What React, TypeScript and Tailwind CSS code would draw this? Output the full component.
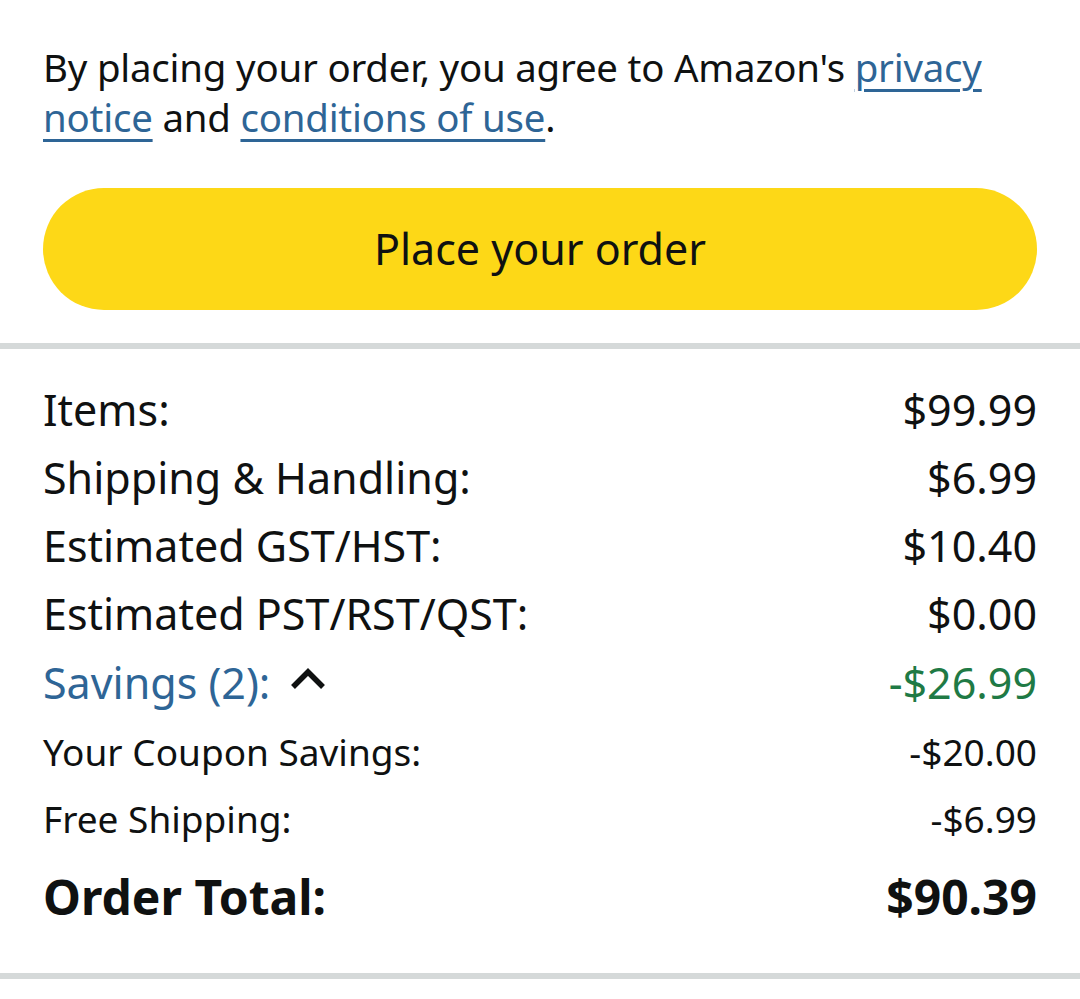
import React from 'react';

const rows = [
  { label: 'Items:', value: '$99.99' },
  { label: 'Shipping & Handling:', value: '$6.99' },
  { label: 'Estimated GST/HST:', value: '$10.40' },
  { label: 'Estimated PST/RST/QST:', value: '$0.00' },
];

const savings = [
  { label: 'Your Coupon Savings:', value: '-$20.00' },
  { label: 'Free Shipping:', value: '-$6.99' },
];

export default function App() {
  return (
    <div className="w-[1080px] min-h-[999px] bg-white text-[#0f1111] font-['Noto_Sans','Open_Sans',sans-serif]">
      {/* Legal notice + button */}
      <div className="px-[43px] pt-[42px]">
        <p className="text-[38.4px] leading-[50px] tracking-[-0.2px]">
          By placing your order, you agree to Amazon's{' '}
          <a href="#" className="text-[#2e6596] underline decoration-[3px] underline-offset-[7px]">privacy notice</a> and{' '}
          <a href="#" className="text-[#2e6596] underline decoration-[3px] underline-offset-[7px]">conditions of use</a>.
        </p>
        <button className="mt-[46px] w-full h-[122px] rounded-full bg-[#fdd817] text-[43px] text-[#0f1111]">
          Place your order
        </button>
      </div>

      <div className="mt-[33px] h-[6px] bg-[#d5d9d9]" />

      {/* Summary */}
      <div className="px-[43px] pt-[27px] pb-[31px]">
        {rows.map((r) => (
          <div key={r.label} className="flex justify-between items-center h-[68px] text-[43px]">
            <span>{r.label}</span>
            <span>{r.value}</span>
          </div>
        ))}
        <div className="flex justify-between items-center h-[70px] text-[43px]">
          <span className="flex items-center gap-[20px] text-[#2e6596]">
            Savings (2):
            <svg width="36" height="22" viewBox="0 0 36 22" fill="none" className="mt-[-8px]">
              <path d="M3 19 L18 4 L33 19" stroke="#0f1111" strokeWidth="5.5" />
            </svg>
          </span>
          <span className="text-[#1f7a45]">-$26.99</span>
        </div>
        {savings.map((r) => (
          <div key={r.label} className="flex justify-between items-center h-[67px] text-[37px]">
            <span>{r.label}</span>
            <span>{r.value}</span>
          </div>
        ))}
        <div className="flex justify-between items-center h-[90px] text-[48px] font-bold">
          <span>Order Total:</span>
          <span>$90.39</span>
        </div>
      </div>

      <div className="h-[6px] bg-[#d5d9d9]" />
    </div>
  );
}
